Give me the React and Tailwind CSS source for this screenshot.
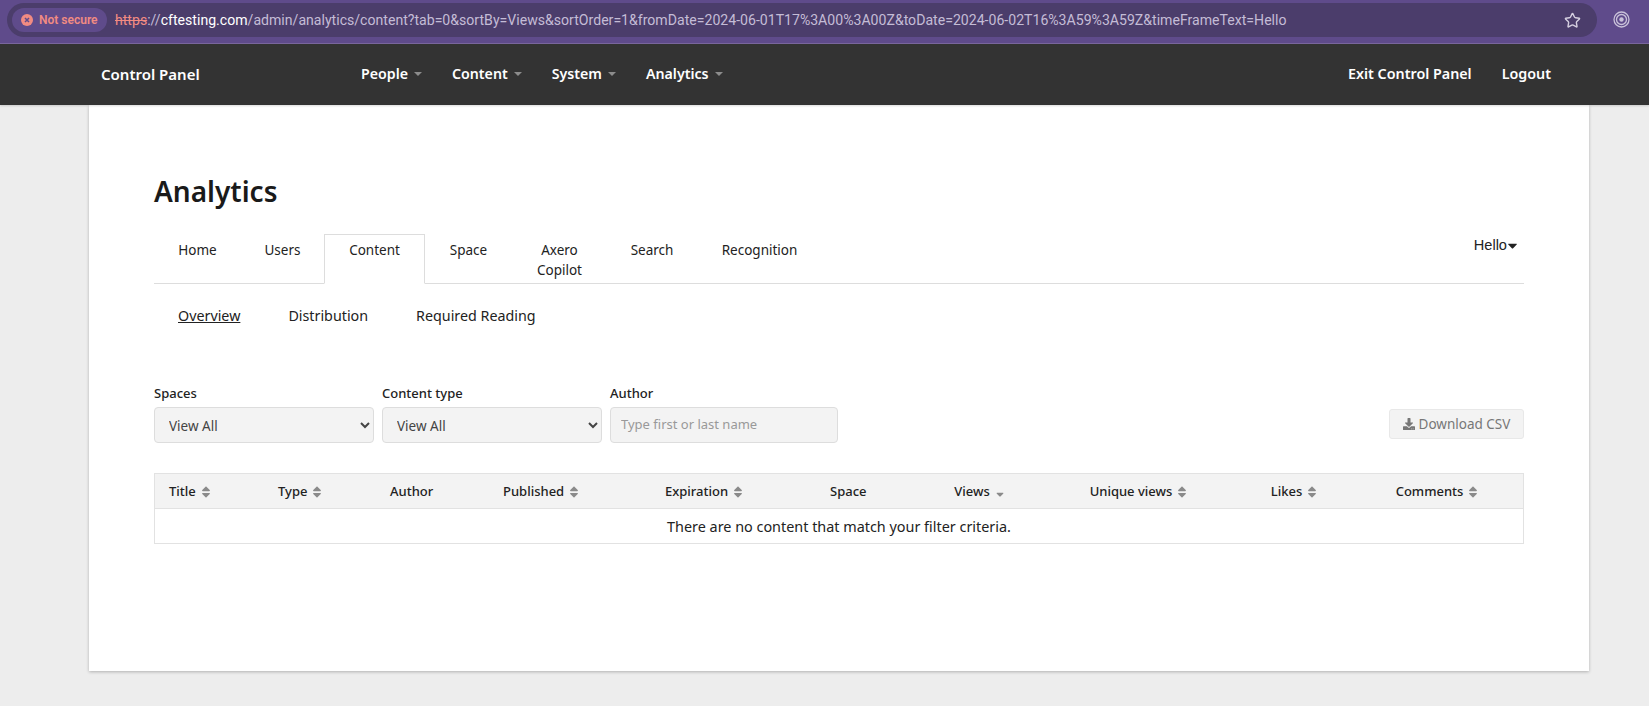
import React from "react";
import { FaSort, FaSortDown, FaDownload, FaCaretDown } from "react-icons/fa";
import { Star } from "lucide-react";

const font = { fontFamily: '"Noto Sans", sans-serif' };

function SortIcon({ down }) {
  return down ? (
    <FaSortDown className="inline-block ml-[4px] text-[12px] text-[#8a8a8a]" />
  ) : (
    <FaSort className="inline-block ml-[3px] text-[14px] text-[#8a8a8a]" />
  );
}

function NavItem({ label }) {
  return (
    <a className="flex items-center text-[14.2px] font-semibold text-white mr-[30px]">
      {label}
      <span className="ml-[6px] w-0 h-0 border-x-[4px] border-x-transparent border-t-[4px] border-t-[#8c8c8c]" />
    </a>
  );
}

const cols = [
  ["Title", 109, false, true],
  ["Type", 112, false, true],
  ["Author", 113, false, false],
  ["Published", 162, false, true],
  ["Expiration", 165, false, true],
  ["Space", 103, false, false],
  ["Views", 122, true, true, true],
  ["Unique views", 197, true, true],
  ["Likes", 114, true, true],
  ["Comments", 173, true, true],
];

const tabs = [
  ["Home", "w-[87px]"],
  ["Users", "w-[83px]"],
  ["Content", "w-[101px]", true],
  ["Space", "w-[87px]"],
  ["Axero Copilot", "w-[95px]"],
  ["Search", "w-[90px]"],
  ["Recognition", "w-[125px]"],
];

export default function App() {
  return (
    <div className="w-[1649px] h-[706px] overflow-hidden bg-[#ededed] flex flex-col" style={font}>
      {/* browser bar */}
      <div className="h-[44px] shrink-0 bg-[#5f4b8b] border-b border-[#7a679f] flex items-start pt-[3px] pl-[7px]">
        <div className="w-[1590px] h-[34px] rounded-full bg-[#4b3d6b] flex items-center pl-[5px] pr-[16px]">
          <div className="h-[24px] w-[95px] rounded-full bg-[#5f4b8b] flex items-center pl-[9px] shrink-0">
            <svg width="12" height="12" viewBox="0 0 12 12">
              <circle cx="6" cy="6" r="6" fill="#f28b82" />
              <path d="M4 4l4 4M8 4l-4 4" stroke="#5f4b8b" strokeWidth="1.5" />
            </svg>
            <span className="ml-[6px] text-[12px] font-semibold text-[#f28b82] whitespace-nowrap" style={{ fontFamily: "Roboto, sans-serif" }}>
              Not secure
            </span>
          </div>
          <div className="ml-[8px] pt-[2px] flex-1 text-[14.1px] whitespace-nowrap overflow-hidden text-[#c4bcd6]" style={{ fontFamily: "Roboto, sans-serif" }}>
            <span className="text-[#f28b82] line-through">https</span>
            <span>://</span>
            <span className="text-white">cftesting.com</span>
            <span>/admin/analytics/content?tab=0&amp;sortBy=Views&amp;sortOrder=1&amp;fromDate=2024-06-01T17%3A00%3A00Z&amp;toDate=2024-06-02T16%3A59%3A59Z&amp;timeFrameText=Hello</span>
          </div>
          <Star size={17} className="text-[#d5cfe0] shrink-0" strokeWidth={2} />
        </div>
        <svg className="ml-[16px] mt-[8px] shrink-0" width="17" height="17" viewBox="0 0 17 17" fill="none" stroke="#c9c2d9">
          <circle cx="8.5" cy="8.5" r="7.5" strokeWidth="1.3" />
          <circle cx="8.5" cy="8.5" r="5" strokeWidth="1.3" />
          <circle cx="8.5" cy="8.5" r="2.2" fill="#c9c2d9" stroke="none" />
        </svg>
      </div>

      {/* nav */}
      <div className="h-[61px] shrink-0 bg-[#333333] flex items-center pb-[1px] pl-[101px] pr-[98px] relative z-10 shadow-[0_1px_2px_rgba(0,0,0,0.15)]">
        <a className="w-[260px] text-[15px] font-semibold text-white">Control Panel</a>
        <div className="flex">
          <NavItem label="People" />
          <NavItem label="Content" />
          <NavItem label="System" />
          <NavItem label="Analytics" />
        </div>
        <div className="ml-auto flex gap-[30px] text-[14.3px] font-semibold text-white">
          <a>Exit Control Panel</a>
          <a>Logout</a>
        </div>
      </div>

      {/* card */}
      <div className="w-[1500px] h-[566px] ml-[89px] shrink-0 bg-white shadow-[0_1px_3px_rgba(0,0,0,0.25)] px-[65px] pt-[67px]">
        <h1 className="text-[28px] leading-[38px] font-semibold text-[#1a1a1a]">Analytics</h1>

        {/* tabs */}
        <div className="mt-[24px] h-[50px] border-b border-[#dddddd] flex items-start relative">
          {tabs.map(([t, w, active]) => (
            <div
              key={t}
              className={`${w} h-[50px] shrink-0 text-center text-[13.5px] leading-[20px] text-[#222222] px-[12px] ${
                active ? "border border-[#dddddd] border-b-white bg-white pt-[5px]" : "pt-[6px]"
              }`}
            >
              {t}
            </div>
          ))}
          <div className="ml-auto mr-[4px] mt-[1px] flex items-center text-[14.6px] text-[#222222]" style={{ fontFamily: '"Liberation Sans", sans-serif' }}>
            Hello
            <FaCaretDown className="text-[15px] -ml-[2px]" />
          </div>
        </div>

        {/* sub tabs */}
        <div className="mt-[22px] flex pl-[24px] text-[14.3px] leading-[20px] text-[#222222]">
          <a className="underline mr-[48px]">Overview</a>
          <a className="mr-[48px]">Distribution</a>
          <a>Required Reading</a>
        </div>

        {/* filters */}
        <div className="mt-[58px] flex items-end">
          <div className="w-[220px] mr-[8px]">
            <div className="text-[13px] leading-[18px] font-medium text-[#222222] mb-[5px]">Spaces</div>
            <select className="w-full h-[36px] pl-[10px] pt-[2px] bg-[#f3f3f3] border border-[#dddddd] rounded-[4px] text-[13.5px] text-[#444444]">
              <option>View All</option>
            </select>
          </div>
          <div className="w-[220px] mr-[8px]">
            <div className="text-[13px] leading-[18px] font-medium text-[#222222] mb-[5px]">Content type</div>
            <select className="w-full h-[36px] pl-[10px] pt-[2px] bg-[#f3f3f3] border border-[#dddddd] rounded-[4px] text-[13.5px] text-[#444444]">
              <option>View All</option>
            </select>
          </div>
          <div className="w-[228px]">
            <div className="text-[13px] leading-[18px] font-medium text-[#222222] mb-[5px]">Author</div>
            <input
              readOnly
              placeholder="Type first or last name"
              className="w-full h-[36px] px-[10px] pb-[2px] bg-[#f3f3f3] border border-[#dddddd] rounded-[4px] text-[13px] placeholder:text-[#999999]"
            />
          </div>
          <button className="ml-auto mb-[4px] h-[30px] w-[135px] flex items-center justify-center gap-[4px] bg-[#f3f3f3] border border-[#e8e8e8] rounded-[3px] text-[13.5px] text-[#777777]">
            <FaDownload className="text-[12px]" />
            Download CSV
          </button>
        </div>

        {/* table */}
        <table className="mt-[30px] w-[1370px] table-fixed border-separate border-spacing-0 text-[13px]">
          <colgroup>
            {cols.map(([n, w]) => (
              <col key={n} style={{ width: w }} />
            ))}
          </colgroup>
          <thead>
            <tr className="bg-[#f3f3f3] h-[36px]">
              {cols.map(([n, , center, sort, down]) => (
                <th
                  key={n}
                  className={`pt-[1px] border-y border-[#e2e2e2] first:border-l last:border-r first:border-l-[#e2e2e2] last:border-r-[#e2e2e2] font-medium text-[#222222] whitespace-nowrap ${
                    center ? "text-center pl-[2px]" : "text-left pl-[15px] first:pl-[14px]"
                  }`}
                >
                  {n}
                  {sort && <SortIcon down={down} />}
                </th>
              ))}
            </tr>
          </thead>
          <tbody>
            <tr className="h-[35px]">
              <td colSpan={10} className="pt-[1px] border border-[#e2e2e2] border-t-0 text-center text-[14.4px] text-[#222222]">
                There are no content that match your filter criteria.
              </td>
            </tr>
          </tbody>
        </table>
      </div>
    </div>
  );
}
